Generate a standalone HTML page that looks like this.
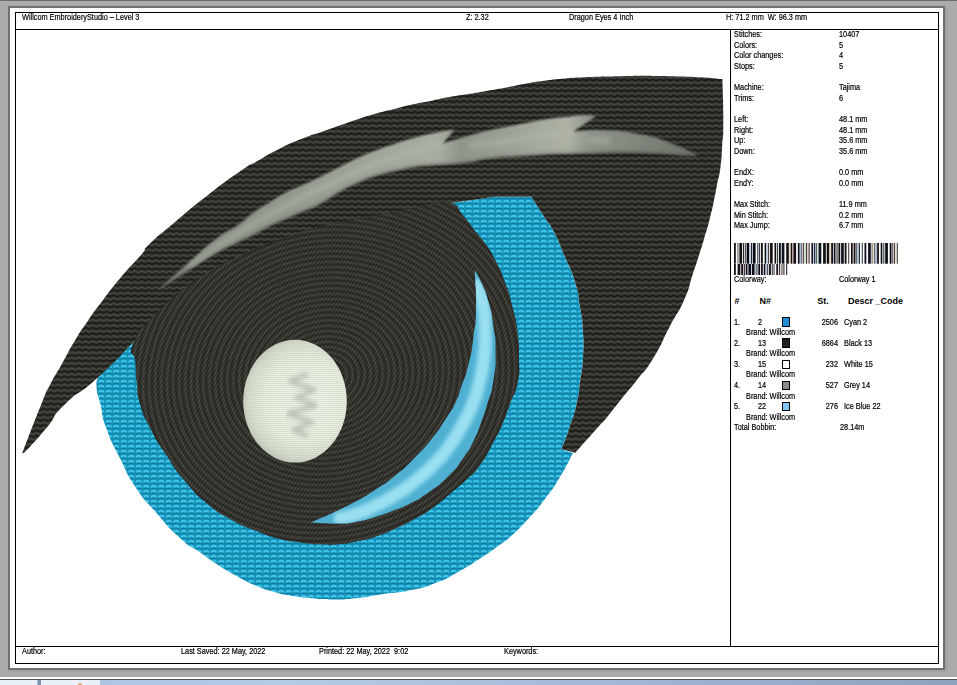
<!DOCTYPE html>
<html>
<head>
<meta charset="utf-8">
<title>Print Preview</title>
<style>
html,body{margin:0;padding:0;}
body{width:957px;height:685px;overflow:hidden;background:#ababab;position:relative;font-family:"Liberation Sans",sans-serif;}
#topstrip{position:absolute;left:0;top:0;width:957px;height:1px;background:#6f6f6f;}
#pageshadow{position:absolute;left:8px;top:6px;width:937px;height:664px;background:#707070;box-shadow:1px 1px 3px rgba(0,0,0,0.12);}
#page{position:absolute;left:10px;top:8px;width:933px;height:660px;background:#fff;}
.ln{position:absolute;background:#000;}
.t{position:absolute;white-space:pre;font-size:8.5px;line-height:10px;color:#000;height:10px;transform:scaleX(0.86);-webkit-text-stroke:0.2px #000;transform-origin:0 0;}
.b{position:absolute;white-space:pre;font-size:9px;line-height:12px;font-weight:bold;color:#000;height:12px;}
.r{text-align:right;transform-origin:100% 0;}
.sw{position:absolute;width:6px;height:7.4px;border:1px solid #000;}
#botwhite{position:absolute;left:0;top:677px;width:957px;height:2px;background:#fdfdfd;}
#botdark{position:absolute;left:0;top:679px;width:957px;height:1px;background:#4a5560;}
#botbar{position:absolute;left:0;top:680px;width:957px;height:5px;background:linear-gradient(to right,#a9c3e0 0%,#b4cbe5 30%,#9fb4d0 70%,#8ea2bd 100%);}
.tab{position:absolute;top:680px;height:5px;background:#eaf0f7;}
</style>
</head>
<body>
<div id="topstrip"></div>
<div id="pageshadow"></div>
<div id="page"></div>

<!-- frame lines (absolute page coordinates) -->
<div class="ln" style="left:15px;top:12px;width:924px;height:1px"></div>
<div class="ln" style="left:15px;top:29px;width:924px;height:1px"></div>
<div class="ln" style="left:15px;top:646px;width:924px;height:1px"></div>
<div class="ln" style="left:15px;top:663px;width:924px;height:1px"></div>
<div class="ln" style="left:15px;top:12px;width:1px;height:652px"></div>
<div class="ln" style="left:938px;top:12px;width:1px;height:652px"></div>
<div class="ln" style="left:730px;top:29px;width:1px;height:618px"></div>

<!-- DESIGN-SVG -->
<svg id="design" width="714" height="616" viewBox="16 30 714 616" style="position:absolute;left:16px;top:30px">
<defs>
<pattern id="pk" width="7" height="5.4" patternUnits="userSpaceOnUse">
<rect width="7" height="5.4" fill="#2a2b26"/>
<path d="M0,1.7 Q1.75,0.4 3.5,1.7 T7,1.7" stroke="#494b43" stroke-width="1.5" fill="none"/>
<path d="M0,4.3 Q1.75,3.5 3.5,4.3 T7,4.3" stroke="#181815" stroke-width="1.2" fill="none"/>
</pattern>
<radialGradient id="pp" gradientUnits="userSpaceOnUse" cx="326" cy="376" r="5.3" spreadMethod="repeat" gradientTransform="translate(326,376) rotate(-12) scale(1.14,1) translate(-326,-376)">
<stop offset="0" stop-color="#2f2e29"/><stop offset="0.4" stop-color="#4c4b44"/><stop offset="0.7" stop-color="#3b3a35"/><stop offset="1" stop-color="#2f2e29"/>
</radialGradient>
<pattern id="ph" width="3" height="3" patternUnits="userSpaceOnUse" patternTransform="rotate(-55)"><path d="M0,1.5 H3" stroke="#000" stroke-width="1.2" opacity="0.36"/></pattern>
<pattern id="pc" width="7.5" height="5" patternUnits="userSpaceOnUse">
<rect width="7.5" height="5" fill="#1a9dc6"/>
<path d="M0.7,2.1 Q3.75,-0.4 6.8,2.1" stroke="#42c8ea" stroke-width="1.6" fill="none"/>
<path d="M0.7,4.3 Q3.75,2.3 6.8,4.3" stroke="#0f7599" stroke-width="1.1" fill="none"/>
<path d="M0,0 V5 M7.5,0 V5" stroke="#1485ad" stroke-width="1"/>
</pattern>
<linearGradient id="gl" gradientUnits="userSpaceOnUse" x1="157" y1="0" x2="698" y2="0">
<stop offset="0" stop-color="#80857b"/><stop offset="0.26" stop-color="#969b90"/><stop offset="0.52" stop-color="#a9aea2"/><stop offset="0.56" stop-color="#90958a"/><stop offset="0.76" stop-color="#adb2a5"/><stop offset="0.80" stop-color="#8f948a"/><stop offset="0.92" stop-color="#7d8278"/><stop offset="1" stop-color="#6a6f66"/>
</linearGradient>
<radialGradient id="gw" gradientUnits="userSpaceOnUse" cx="306" cy="400" r="68">
<stop offset="0" stop-color="#eef2e8"/><stop offset="0.6" stop-color="#e7eddf"/><stop offset="0.85" stop-color="#d6ddce"/><stop offset="1" stop-color="#bac2b2"/>
</radialGradient>
<pattern id="pw" width="4" height="2" patternUnits="userSpaceOnUse"><path d="M0,1.5 H4" stroke="#97a08e" stroke-width="0.7" opacity="0.24"/></pattern>
<linearGradient id="gc" gradientUnits="userSpaceOnUse" x1="480" y1="275" x2="330" y2="520">
<stop offset="0" stop-color="#57b9e0"/><stop offset="0.4" stop-color="#8fd3ef"/><stop offset="0.8" stop-color="#7ccbeb"/><stop offset="1" stop-color="#4aaedb"/>
</linearGradient>
<filter id="bl" x="-20%" y="-20%" width="140%" height="140%"><feGaussianBlur stdDeviation="1.6"/></filter>
<filter id="bl2" x="-5%" y="-10%" width="110%" height="120%"><feGaussianBlur stdDeviation="0.9"/></filter>
<filter id="bl3" x="-5%" y="-20%" width="110%" height="140%"><feGaussianBlur stdDeviation="2.2"/></filter>
<filter id="bl4" x="-5%" y="-5%" width="110%" height="110%"><feGaussianBlur stdDeviation="0.6"/></filter>
<clipPath id="cresclip"><path d="M474.7,269.7C476.8,273.8 476.4,271.2 481.0,282.0C485.6,292.8 484.3,287.0 488.5,302.0C492.7,317.0 491.2,311.0 493.5,327.0C495.8,343.0 495.5,332.3 495.5,350.0C495.5,367.7 496.3,361.7 493.5,380.0C490.7,398.3 491.2,390.7 487.0,405.0C482.8,419.3 485.5,411.0 481.0,423.0C476.5,435.0 479.3,429.5 473.5,441.0C467.7,452.5 472.0,445.7 463.5,457.5C455.0,469.3 460.1,464.6 448.0,476.5C435.9,488.4 439.9,484.2 427.2,493.2C414.5,502.2 421.0,497.8 410.0,503.5C399.0,509.2 405.7,505.8 394.1,510.3C382.5,514.8 387.8,513.2 375.3,517.0C362.8,520.8 369.0,519.5 356.5,521.7C344.0,523.9 353.1,523.3 337.7,523.6C322.3,523.9 319.5,522.9 310.4,522.6C319.5,518.5 322.3,517.6 337.7,510.4C353.1,503.2 344.0,507.9 356.5,501.0C369.0,494.1 362.8,497.9 375.3,489.7C387.8,481.5 381.5,486.6 394.1,476.5C406.7,466.4 400.4,472.1 413.0,459.5C425.6,446.9 421.1,452.0 431.8,438.8C442.5,425.6 437.0,432.3 445.0,420.0C453.0,407.7 450.5,412.8 455.8,402.0C461.1,391.2 456.8,400.0 461.0,387.7C465.2,375.4 464.3,381.8 468.4,365.0C472.5,348.2 470.9,356.7 473.4,337.4C475.9,318.1 475.6,329.6 476.0,307.0C476.4,284.4 475.1,282.1 474.7,269.7Z"/></clipPath>
<clipPath id="lashclip"><path d="M157.5,290.5C167.6,281.5 168.2,280.7 187.7,263.5C207.2,246.3 199.6,251.5 215.9,239.0C232.2,226.5 224.2,234.7 236.7,226.0C249.2,217.3 242.2,220.8 253.4,212.8C264.6,204.8 259.0,208.9 270.2,202.0C281.4,195.1 276.8,197.3 286.9,192.0C297.0,186.7 289.6,191.0 300.6,186.0C311.6,181.0 307.3,183.2 320.0,177.0C332.7,170.8 326.2,173.8 338.8,167.5C351.4,161.2 345.1,163.8 357.7,158.0C370.3,152.2 364.0,155.0 376.5,150.2C389.0,145.4 382.8,147.8 395.3,143.7C407.8,139.6 401.5,141.5 414.1,138.0C426.7,134.5 419.5,136.1 433.0,133.3C446.5,130.5 447.4,130.8 454.6,129.5L442.0,144.6C445.3,143.3 442.3,143.9 451.8,140.8C461.3,137.7 457.9,138.7 470.6,135.2C483.3,131.7 477.3,133.2 490.0,130.3C502.7,127.4 496.2,129.0 508.8,126.5C521.4,124.0 515.1,125.1 527.7,122.7C540.3,120.3 534.0,121.2 546.5,119.3C559.0,117.4 552.8,118.5 565.3,117.1C577.8,115.7 573.7,115.5 584.1,115.2C594.5,114.9 592.3,115.8 596.4,116.1L572.8,132.1C578.5,131.5 579.0,130.8 590.0,130.3C601.0,129.8 595.3,130.2 605.7,130.5C616.1,130.8 610.9,130.2 621.3,131.3C631.7,132.4 626.5,131.9 637.0,133.7C647.5,135.5 642.2,133.9 652.7,136.8C663.2,139.7 658.0,138.4 668.4,142.3C678.8,146.2 674.1,144.2 684.0,148.6C693.9,153.0 693.5,153.3 698.2,155.6C693.5,155.6 699.2,156.4 684.0,155.6C668.8,154.8 673.6,154.3 652.7,153.3C631.8,152.3 642.2,152.5 621.3,152.5C600.4,152.5 608.7,152.9 590.0,153.3C571.3,153.7 586.1,153.0 565.3,153.8C544.5,154.6 552.8,154.1 527.7,155.7C502.6,157.3 509.0,156.4 490.0,158.5C471.0,160.6 483.3,160.2 470.6,162.0C457.9,163.8 464.3,162.9 451.8,164.0C439.3,165.1 445.6,164.2 433.0,165.3C420.4,166.4 426.7,165.3 414.1,167.2C401.5,169.1 407.8,168.2 395.3,171.0C382.8,173.8 389.0,171.7 376.5,175.7C364.0,179.7 370.3,177.4 357.7,183.0C345.1,188.6 351.4,185.5 338.8,192.5C326.2,199.5 333.1,197.2 320.0,204.0C306.9,210.8 310.4,208.2 299.4,213.0C288.4,217.8 296.6,214.2 286.9,218.5C277.2,222.8 281.4,220.5 270.2,226.0C259.0,231.5 264.6,229.3 253.4,235.0C242.2,240.7 249.2,236.8 236.7,243.0C224.2,249.2 232.2,244.2 215.9,253.5C199.6,262.8 207.2,258.7 187.7,271.0C168.2,283.3 167.6,284.0 157.5,290.5Z"/></clipPath>
</defs>
<path d="M450.8,203L495.0,196.8L531.4,196.8C535.9,203.9 537.5,206.3 545.0,218.0C552.5,229.7 547.3,219.0 554.0,232.0C560.7,245.0 558.0,240.3 565.0,257.0C572.0,273.7 570.0,265.3 575.0,282.0C580.0,298.7 577.3,290.3 580.0,307.0C582.7,323.7 582.0,315.2 583.0,332.0C584.0,348.8 584.0,340.6 583.0,357.5C582.0,374.4 582.1,367.1 580.0,382.6C577.9,398.1 580.3,388.5 576.6,404.0C572.9,419.5 574.0,413.9 569.0,429.0C564.0,444.1 564.0,442.5 561.5,449.2L572.8,453.0C568.5,461.0 569.3,461.7 560.0,477.0C550.7,492.3 555.8,484.8 545.0,499.0C534.2,513.2 539.3,506.8 527.6,519.5C515.9,532.2 519.1,528.7 510.0,537.0C500.9,545.3 510.5,537.1 500.3,544.5C490.1,551.9 493.3,550.0 479.4,559.1C465.5,568.2 473.1,563.7 458.5,571.7C443.9,579.7 451.7,576.8 435.5,583.0C419.3,589.2 428.3,586.5 410.0,590.3C391.7,594.1 398.7,591.8 380.5,594.4C362.3,597.0 372.1,596.5 355.4,598.2C338.7,599.9 344.8,599.4 330.3,599.4C315.8,599.4 324.2,599.4 311.8,598.3C299.4,597.2 305.6,598.1 293.0,596.0C280.4,593.9 286.7,595.6 274.1,592.0C261.5,588.4 267.8,590.6 255.3,585.3C242.8,580.0 249.0,582.8 236.5,576.0C224.0,569.2 230.3,572.9 217.7,564.8C205.1,556.7 211.4,560.5 198.8,551.6C186.2,542.7 194.4,551.2 180.0,538.0C165.6,524.8 170.4,529.0 155.6,512.0C140.8,495.0 147.2,504.7 135.5,487.0C123.8,469.3 130.0,478.3 120.4,459.0C110.8,439.7 113.3,447.3 106.6,429.0C99.9,410.7 103.7,417.7 100.4,404.0C97.1,390.3 97.4,396.8 96.6,388.0C95.8,379.2 97.5,381.1 97.9,377.6L134.3,341.2Z" fill="url(#pc)"/>
<path d="M22.0,453.7C28.5,437.1 32.1,426.9 41.4,404.0C50.7,381.1 42.9,398.8 50.0,385.0C57.1,371.2 54.3,377.5 62.7,362.5C71.1,347.5 66.9,353.8 75.3,340.0C83.7,326.2 78.6,334.3 87.8,321.0C97.0,307.7 92.1,314.3 103.0,300.0C113.9,285.7 107.9,292.8 120.4,278.0C132.9,263.2 130.6,267.1 140.5,255.6C150.4,244.1 138.7,254.7 150.0,243.6C161.3,232.5 155.7,238.2 174.5,222.4C193.3,206.6 183.3,214.1 206.5,196.2C229.7,178.3 227.9,179.8 244.1,168.6C260.3,157.4 243.0,169.2 255.0,162.5C267.0,155.8 263.3,156.8 280.0,148.5C296.7,140.2 291.7,142.9 305.0,137.5C318.3,132.1 308.7,136.3 320.0,132.4C331.3,128.5 326.2,130.2 338.8,125.8C351.4,121.4 345.1,123.3 357.7,119.2C370.3,115.1 364.0,117.0 376.5,113.5C389.0,110.0 382.8,111.9 395.3,108.8C407.8,105.7 401.5,106.9 414.1,104.1C426.7,101.3 420.4,102.9 433.0,100.4C445.6,97.9 439.3,98.8 451.8,96.6C464.3,94.4 457.9,95.9 470.6,93.8C483.3,91.7 477.3,92.6 490.0,90.3C502.7,88.0 496.2,89.3 508.8,86.9C521.4,84.5 515.1,85.4 527.7,83.2C540.3,81.0 534.0,82.0 546.5,80.4C559.0,78.8 552.8,79.6 565.3,78.5C577.8,77.4 565.3,78.0 584.1,77.2C602.9,76.4 598.9,76.6 621.8,76.2C644.7,75.8 633.3,75.8 652.7,75.9C672.1,76.0 664.3,76.0 680.0,76.4C695.7,76.8 685.6,76.3 699.7,77.2C713.8,78.1 714.8,78.5 722.4,79.1C722.7,93.7 723.4,100.5 723.3,122.8C723.2,145.1 723.1,131.3 722.2,146.0C721.3,160.7 722.2,154.0 720.5,167.0C718.8,180.0 719.1,174.0 717.0,185.0C714.9,196.0 716.5,188.7 714.1,200.0C711.7,211.3 713.1,205.8 709.7,219.0C706.3,232.2 707.8,226.3 703.9,239.5C700.0,252.7 701.9,246.3 698.0,258.5C694.1,270.7 696.8,262.2 692.2,276.0C687.6,289.8 691.7,283.0 684.1,300.0C676.5,317.0 679.5,308.0 669.5,327.0C659.5,346.0 664.8,339.3 654.0,357.0C643.2,374.7 646.1,368.1 637.0,380.0C627.9,391.9 633.5,384.2 626.7,392.6C619.9,401.0 623.4,396.7 616.7,405.1C610.0,413.5 613.7,409.3 606.6,417.7C599.5,426.1 605.8,418.5 595.3,430.2C584.8,441.9 581.9,445.3 575.2,452.8L561.5,449.2C564.0,442.5 564.0,444.1 569.0,429.0C574.0,413.9 572.9,419.5 576.6,404.0C580.3,388.5 577.9,398.1 580.0,382.6C582.1,367.1 582.0,374.4 583.0,357.5C584.0,340.6 584.0,348.8 583.0,332.0C582.0,315.2 582.7,323.7 580.0,307.0C577.3,290.3 580.0,298.7 575.0,282.0C570.0,265.3 572.0,273.7 565.0,257.0C558.0,240.3 560.7,245.0 554.0,232.0C547.3,219.0 552.5,229.7 545.0,218.0C537.5,206.3 535.9,203.9 531.4,196.8L495.0,196.8L450.8,203.0L300.0,300.0L134.3,341.2C122.2,353.3 120.9,356.7 97.9,377.6C74.9,398.5 82.0,387.7 65.2,404.0C48.4,420.3 59.3,412.4 47.6,426.6C35.9,440.8 38.5,437.7 30.0,446.7C21.5,455.7 24.7,451.4 22.0,453.7Z" fill="url(#pk)"/>
<path d="M134.3,341.2C126.1,358.7 134.7,348.8 135.5,362.6C136.3,376.4 135.3,368.8 136.8,382.6C138.3,396.4 135.4,388.5 140.0,404.0C144.6,419.5 142.1,412.3 150.6,429.0C159.1,445.7 153.9,436.3 165.6,454.0C177.3,471.7 171.5,465.2 185.7,482.0C199.9,498.8 193.2,491.9 208.3,504.4C223.4,516.9 215.4,510.8 231.0,519.5C246.6,528.2 238.7,524.1 255.0,530.6C271.3,537.1 265.0,535.1 280.0,539.0C295.0,542.9 287.1,540.6 300.0,542.4C312.9,544.2 306.2,543.7 318.8,544.3C331.4,544.9 325.1,545.3 337.7,544.3C350.3,543.3 344.0,543.9 356.5,541.4C369.0,538.9 362.8,540.8 375.3,536.7C387.8,532.6 381.5,534.8 394.1,529.2C406.7,523.6 400.4,526.7 413.0,519.8C425.6,512.9 419.3,517.3 431.8,508.5C444.3,499.7 439.2,502.9 450.6,493.4C462.0,483.9 456.2,489.4 466.0,480.0C475.8,470.6 471.0,477.5 480.0,465.2C489.0,452.9 485.5,456.7 493.0,443.0C500.5,429.3 496.8,437.0 502.5,424.0C508.2,411.0 505.0,417.8 510.0,404.0C515.0,390.2 514.6,398.1 517.6,382.6C520.6,367.1 519.0,374.2 519.0,357.5C519.0,340.8 519.7,349.1 517.6,332.4C515.5,315.7 516.8,324.1 512.6,307.3C508.4,290.5 510.9,297.9 505.0,282.0C499.1,266.1 501.3,272.1 495.0,259.6C488.7,247.1 492.3,253.7 486.0,244.5C479.7,235.3 483.5,241.6 476.0,232.0C468.5,222.4 471.8,225.4 463.4,215.7C455.0,206.0 461.7,206.9 450.8,203.0C439.9,199.1 447.6,201.5 430.7,204.0C413.8,206.5 423.6,205.7 400.0,210.5C376.4,215.3 386.8,213.1 360.0,218.5C333.2,223.9 347.7,219.3 319.6,226.7C291.5,234.1 305.0,229.8 275.7,240.8C246.4,251.8 259.0,246.0 231.8,259.6C204.6,273.2 217.9,264.8 194.0,281.6C170.1,298.4 179.9,290.1 160.0,310.0C140.1,329.9 142.5,323.7 134.3,341.2Z" fill="url(#pp)"/>
<path d="M134.3,341.2C126.1,358.7 134.7,348.8 135.5,362.6C136.3,376.4 135.3,368.8 136.8,382.6C138.3,396.4 135.4,388.5 140.0,404.0C144.6,419.5 142.1,412.3 150.6,429.0C159.1,445.7 153.9,436.3 165.6,454.0C177.3,471.7 171.5,465.2 185.7,482.0C199.9,498.8 193.2,491.9 208.3,504.4C223.4,516.9 215.4,510.8 231.0,519.5C246.6,528.2 238.7,524.1 255.0,530.6C271.3,537.1 265.0,535.1 280.0,539.0C295.0,542.9 287.1,540.6 300.0,542.4C312.9,544.2 306.2,543.7 318.8,544.3C331.4,544.9 325.1,545.3 337.7,544.3C350.3,543.3 344.0,543.9 356.5,541.4C369.0,538.9 362.8,540.8 375.3,536.7C387.8,532.6 381.5,534.8 394.1,529.2C406.7,523.6 400.4,526.7 413.0,519.8C425.6,512.9 419.3,517.3 431.8,508.5C444.3,499.7 439.2,502.9 450.6,493.4C462.0,483.9 456.2,489.4 466.0,480.0C475.8,470.6 471.0,477.5 480.0,465.2C489.0,452.9 485.5,456.7 493.0,443.0C500.5,429.3 496.8,437.0 502.5,424.0C508.2,411.0 505.0,417.8 510.0,404.0C515.0,390.2 514.6,398.1 517.6,382.6C520.6,367.1 519.0,374.2 519.0,357.5C519.0,340.8 519.7,349.1 517.6,332.4C515.5,315.7 516.8,324.1 512.6,307.3C508.4,290.5 510.9,297.9 505.0,282.0C499.1,266.1 501.3,272.1 495.0,259.6C488.7,247.1 492.3,253.7 486.0,244.5C479.7,235.3 483.5,241.6 476.0,232.0C468.5,222.4 471.8,225.4 463.4,215.7C455.0,206.0 461.7,206.9 450.8,203.0C439.9,199.1 447.6,201.5 430.7,204.0C413.8,206.5 423.6,205.7 400.0,210.5C376.4,215.3 386.8,213.1 360.0,218.5C333.2,223.9 347.7,219.3 319.6,226.7C291.5,234.1 305.0,229.8 275.7,240.8C246.4,251.8 259.0,246.0 231.8,259.6C204.6,273.2 217.9,264.8 194.0,281.6C170.1,298.4 179.9,290.1 160.0,310.0C140.1,329.9 142.5,323.7 134.3,341.2Z" fill="url(#ph)"/>
<ellipse cx="295" cy="401.2" rx="51.8" ry="61.4" fill="url(#gw)"/>
<ellipse cx="295" cy="401.2" rx="51.8" ry="61.4" fill="url(#pw)"/>
<polyline points="308,374 290,381 314,390 296,398 316,405 288,414 312,422 294,430 308,436" fill="none" stroke="#7d8278" stroke-width="5" stroke-linejoin="round" opacity="0.36" filter="url(#bl3)"/>
<g filter="url(#bl2)"><path d="M157.5,290.5C167.6,281.5 168.2,280.7 187.7,263.5C207.2,246.3 199.6,251.5 215.9,239.0C232.2,226.5 224.2,234.7 236.7,226.0C249.2,217.3 242.2,220.8 253.4,212.8C264.6,204.8 259.0,208.9 270.2,202.0C281.4,195.1 276.8,197.3 286.9,192.0C297.0,186.7 289.6,191.0 300.6,186.0C311.6,181.0 307.3,183.2 320.0,177.0C332.7,170.8 326.2,173.8 338.8,167.5C351.4,161.2 345.1,163.8 357.7,158.0C370.3,152.2 364.0,155.0 376.5,150.2C389.0,145.4 382.8,147.8 395.3,143.7C407.8,139.6 401.5,141.5 414.1,138.0C426.7,134.5 419.5,136.1 433.0,133.3C446.5,130.5 447.4,130.8 454.6,129.5L442.0,144.6C445.3,143.3 442.3,143.9 451.8,140.8C461.3,137.7 457.9,138.7 470.6,135.2C483.3,131.7 477.3,133.2 490.0,130.3C502.7,127.4 496.2,129.0 508.8,126.5C521.4,124.0 515.1,125.1 527.7,122.7C540.3,120.3 534.0,121.2 546.5,119.3C559.0,117.4 552.8,118.5 565.3,117.1C577.8,115.7 573.7,115.5 584.1,115.2C594.5,114.9 592.3,115.8 596.4,116.1L572.8,132.1C578.5,131.5 579.0,130.8 590.0,130.3C601.0,129.8 595.3,130.2 605.7,130.5C616.1,130.8 610.9,130.2 621.3,131.3C631.7,132.4 626.5,131.9 637.0,133.7C647.5,135.5 642.2,133.9 652.7,136.8C663.2,139.7 658.0,138.4 668.4,142.3C678.8,146.2 674.1,144.2 684.0,148.6C693.9,153.0 693.5,153.3 698.2,155.6C693.5,155.6 699.2,156.4 684.0,155.6C668.8,154.8 673.6,154.3 652.7,153.3C631.8,152.3 642.2,152.5 621.3,152.5C600.4,152.5 608.7,152.9 590.0,153.3C571.3,153.7 586.1,153.0 565.3,153.8C544.5,154.6 552.8,154.1 527.7,155.7C502.6,157.3 509.0,156.4 490.0,158.5C471.0,160.6 483.3,160.2 470.6,162.0C457.9,163.8 464.3,162.9 451.8,164.0C439.3,165.1 445.6,164.2 433.0,165.3C420.4,166.4 426.7,165.3 414.1,167.2C401.5,169.1 407.8,168.2 395.3,171.0C382.8,173.8 389.0,171.7 376.5,175.7C364.0,179.7 370.3,177.4 357.7,183.0C345.1,188.6 351.4,185.5 338.8,192.5C326.2,199.5 333.1,197.2 320.0,204.0C306.9,210.8 310.4,208.2 299.4,213.0C288.4,217.8 296.6,214.2 286.9,218.5C277.2,222.8 281.4,220.5 270.2,226.0C259.0,231.5 264.6,229.3 253.4,235.0C242.2,240.7 249.2,236.8 236.7,243.0C224.2,249.2 232.2,244.2 215.9,253.5C199.6,262.8 207.2,258.7 187.7,271.0C168.2,283.3 167.6,284.0 157.5,290.5Z" fill="url(#gl)"/></g>
<g clip-path="url(#lashclip)" filter="url(#bl3)"><path d="M698.2,155.6C693.5,155.6 699.2,156.4 684.0,155.6C668.8,154.8 673.6,154.3 652.7,153.3C631.8,152.3 642.2,152.5 621.3,152.5C600.4,152.5 608.7,152.9 590.0,153.3C571.3,153.7 586.1,153.0 565.3,153.8C544.5,154.6 552.8,154.1 527.7,155.7C502.6,157.3 509.0,156.4 490.0,158.5C471.0,160.6 483.3,160.2 470.6,162.0C457.9,163.8 464.3,162.9 451.8,164.0C439.3,165.1 445.6,164.2 433.0,165.3C420.4,166.4 426.7,165.3 414.1,167.2C401.5,169.1 407.8,168.2 395.3,171.0C382.8,173.8 389.0,171.7 376.5,175.7C364.0,179.7 370.3,177.4 357.7,183.0C345.1,188.6 351.4,185.5 338.8,192.5C326.2,199.5 333.1,197.2 320.0,204.0C306.9,210.8 310.4,208.2 299.4,213.0C288.4,217.8 296.6,214.2 286.9,218.5C277.2,222.8 281.4,220.5 270.2,226.0C259.0,231.5 264.6,229.3 253.4,235.0C242.2,240.7 249.2,236.8 236.7,243.0C224.2,249.2 232.2,244.2 215.9,253.5C199.6,262.8 207.2,258.7 187.7,271.0C168.2,283.3 167.6,284.0 157.5,290.5" fill="none" stroke="#4e524b" stroke-width="4" opacity="0.4"/><path d="M190,266 L215,248 L260,220 L300,198 L340,179 L380,162 L420,150 L447,143 M470,146 L520,139 L560,134 L574,133 M588,140 L610,141" fill="none" stroke="#b7bcaf" stroke-width="6" opacity="0.4"/></g>
<g filter="url(#bl4)"><path d="M474.7,269.7C476.8,273.8 476.4,271.2 481.0,282.0C485.6,292.8 484.3,287.0 488.5,302.0C492.7,317.0 491.2,311.0 493.5,327.0C495.8,343.0 495.5,332.3 495.5,350.0C495.5,367.7 496.3,361.7 493.5,380.0C490.7,398.3 491.2,390.7 487.0,405.0C482.8,419.3 485.5,411.0 481.0,423.0C476.5,435.0 479.3,429.5 473.5,441.0C467.7,452.5 472.0,445.7 463.5,457.5C455.0,469.3 460.1,464.6 448.0,476.5C435.9,488.4 439.9,484.2 427.2,493.2C414.5,502.2 421.0,497.8 410.0,503.5C399.0,509.2 405.7,505.8 394.1,510.3C382.5,514.8 387.8,513.2 375.3,517.0C362.8,520.8 369.0,519.5 356.5,521.7C344.0,523.9 353.1,523.3 337.7,523.6C322.3,523.9 319.5,522.9 310.4,522.6C319.5,518.5 322.3,517.6 337.7,510.4C353.1,503.2 344.0,507.9 356.5,501.0C369.0,494.1 362.8,497.9 375.3,489.7C387.8,481.5 381.5,486.6 394.1,476.5C406.7,466.4 400.4,472.1 413.0,459.5C425.6,446.9 421.1,452.0 431.8,438.8C442.5,425.6 437.0,432.3 445.0,420.0C453.0,407.7 450.5,412.8 455.8,402.0C461.1,391.2 456.8,400.0 461.0,387.7C465.2,375.4 464.3,381.8 468.4,365.0C472.5,348.2 470.9,356.7 473.4,337.4C475.9,318.1 475.6,329.6 476.0,307.0C476.4,284.4 475.1,282.1 474.7,269.7Z" fill="#4fb0d2"/></g>
<g clip-path="url(#cresclip)"><path d="M476.0,285.0C478.3,291.3 480.0,288.3 483.0,304.0C486.0,319.7 484.7,314.3 485.0,332.0C485.3,349.7 486.0,339.7 484.0,357.0C482.0,374.3 482.7,368.7 479.0,384.0C475.3,399.3 478.0,390.3 473.0,403.0C468.0,415.7 471.7,408.0 464.0,422.0C456.3,436.0 460.0,431.0 450.0,445.0C440.0,459.0 445.7,452.0 434.0,464.0C422.3,476.0 427.7,470.8 415.0,481.0C402.3,491.2 408.7,486.5 396.0,494.5C383.3,502.5 389.7,498.7 377.0,505.0C364.3,511.3 370.3,509.0 358.0,513.5C345.7,518.0 346.0,516.8 340.0,518.5" fill="none" stroke="#9fe2f3" stroke-width="13" stroke-linecap="round" opacity="0.95" filter="url(#bl3)"/></g>
</svg>
<!-- /DESIGN-SVG -->

<!-- header text -->
<div class="t" style="left:22px;top:12.2px">Willcom EmbroideryStudio – Level 3</div>
<div class="t" style="left:466px;top:12.2px">Z: 2.32</div>
<div class="t" style="left:569px;top:12.2px">Dragon Eyes 4 Inch</div>
<div class="t" style="left:726px;top:12.2px">H: 71.2 mm  W: 96.3 mm</div>

<!-- footer text -->
<div class="t" style="left:22px;top:646.2px">Author:</div>
<div class="t" style="left:181px;top:646.2px">Last Saved: 22 May, 2022</div>
<div class="t" style="left:319px;top:646.2px">Printed: 22 May, 2022  9:02</div>
<div class="t" style="left:504px;top:646.2px">Keywords:</div>

<!-- PANEL -->
<div class="t" style="left:734.4px;top:28.95px">Stitches:</div>
<div class="t" style="left:838.6px;top:28.95px">10407</div>
<div class="t" style="left:734.4px;top:39.59px">Colors:</div>
<div class="t" style="left:838.6px;top:39.59px">5</div>
<div class="t" style="left:734.4px;top:50.23px">Color changes:</div>
<div class="t" style="left:838.6px;top:50.23px">4</div>
<div class="t" style="left:734.4px;top:60.87px">Stops:</div>
<div class="t" style="left:838.6px;top:60.87px">5</div>
<div class="t" style="left:734.4px;top:82.15px">Machine:</div>
<div class="t" style="left:838.6px;top:82.15px">Tajima</div>
<div class="t" style="left:734.4px;top:92.79px">Trims:</div>
<div class="t" style="left:838.6px;top:92.79px">6</div>
<div class="t" style="left:734.4px;top:114.07px">Left:</div>
<div class="t" style="left:838.6px;top:114.07px">48.1 mm</div>
<div class="t" style="left:734.4px;top:124.71px">Right:</div>
<div class="t" style="left:838.6px;top:124.71px">48.1 mm</div>
<div class="t" style="left:734.4px;top:135.35px">Up:</div>
<div class="t" style="left:838.6px;top:135.35px">35.6 mm</div>
<div class="t" style="left:734.4px;top:145.99px">Down:</div>
<div class="t" style="left:838.6px;top:145.99px">35.6 mm</div>
<div class="t" style="left:734.4px;top:167.27px">EndX:</div>
<div class="t" style="left:838.6px;top:167.27px">0.0 mm</div>
<div class="t" style="left:734.4px;top:177.91px">EndY:</div>
<div class="t" style="left:838.6px;top:177.91px">0.0 mm</div>
<div class="t" style="left:734.4px;top:199.19px">Max Stitch:</div>
<div class="t" style="left:838.6px;top:199.19px">11.9 mm</div>
<div class="t" style="left:734.4px;top:209.83px">Min Stitch:</div>
<div class="t" style="left:838.6px;top:209.83px">0.2 mm</div>
<div class="t" style="left:734.4px;top:220.47px">Max Jump:</div>
<div class="t" style="left:838.6px;top:220.47px">6.7 mm</div>
<svg style="position:absolute;left:734.2px;top:242.9px" width="164.10" height="20.70"><rect x="0.00" y="0" width="1.80" height="20.70" fill="#14101c"/><rect x="3.60" y="0" width="0.90" height="20.70" fill="#101010"/><rect x="4.50" y="0" width="0.90" height="20.70" fill="#e6e0c4"/><rect x="5.40" y="0" width="2.70" height="20.70" fill="#14101c"/><rect x="8.10" y="0" width="0.90" height="20.70" fill="#d0e2d0"/><rect x="9.00" y="0" width="0.90" height="20.70" fill="#14101c"/><rect x="10.80" y="0" width="0.90" height="20.70" fill="#101010"/><rect x="12.60" y="0" width="2.70" height="20.70" fill="#0a0a14"/><rect x="15.30" y="0" width="1.80" height="20.70" fill="#c6d2e6"/><rect x="17.10" y="0" width="0.90" height="20.70" fill="#101010"/><rect x="18.00" y="0" width="0.90" height="20.70" fill="#c6d2e6"/><rect x="18.90" y="0" width="2.70" height="20.70" fill="#0a0a14"/><rect x="23.40" y="0" width="0.90" height="20.70" fill="#0a0a14"/><rect x="24.30" y="0" width="0.90" height="20.70" fill="#a9bcd6"/><rect x="25.20" y="0" width="0.90" height="20.70" fill="#101010"/><rect x="27.00" y="0" width="1.80" height="20.70" fill="#101010"/><rect x="30.60" y="0" width="1.80" height="20.70" fill="#101010"/><rect x="32.40" y="0" width="1.80" height="20.70" fill="#c6d2e6"/><rect x="34.20" y="0" width="0.90" height="20.70" fill="#14101c"/><rect x="36.00" y="0" width="2.70" height="20.70" fill="#1a1018"/><rect x="40.50" y="0" width="1.80" height="20.70" fill="#101010"/><rect x="42.30" y="0" width="0.90" height="20.70" fill="#d0e2d0"/><rect x="43.20" y="0" width="0.90" height="20.70" fill="#0c1420"/><rect x="45.00" y="0" width="1.80" height="20.70" fill="#0a0a14"/><rect x="47.70" y="0" width="2.70" height="20.70" fill="#0c1420"/><rect x="52.20" y="0" width="2.70" height="20.70" fill="#1a1018"/><rect x="54.90" y="0" width="1.80" height="20.70" fill="#e6e0c4"/><rect x="56.70" y="0" width="1.80" height="20.70" fill="#1a1018"/><rect x="58.50" y="0" width="0.90" height="20.70" fill="#e3c8c8"/><rect x="59.40" y="0" width="2.70" height="20.70" fill="#1a1018"/><rect x="63.90" y="0" width="1.80" height="20.70" fill="#0a0a14"/><rect x="65.70" y="0" width="1.80" height="20.70" fill="#a9bcd6"/><rect x="67.50" y="0" width="0.90" height="20.70" fill="#1a1018"/><rect x="68.40" y="0" width="0.90" height="20.70" fill="#e3c8c8"/><rect x="69.30" y="0" width="0.90" height="20.70" fill="#14101c"/><rect x="70.20" y="0" width="1.80" height="20.70" fill="#d0e2d0"/><rect x="72.00" y="0" width="0.90" height="20.70" fill="#14101c"/><rect x="72.90" y="0" width="1.80" height="20.70" fill="#e3c8c8"/><rect x="74.70" y="0" width="0.90" height="20.70" fill="#1a1018"/><rect x="77.40" y="0" width="1.80" height="20.70" fill="#1a1018"/><rect x="79.20" y="0" width="0.90" height="20.70" fill="#c6d2e6"/><rect x="80.10" y="0" width="0.90" height="20.70" fill="#14101c"/><rect x="81.00" y="0" width="0.90" height="20.70" fill="#a9bcd6"/><rect x="81.90" y="0" width="0.90" height="20.70" fill="#0c1420"/><rect x="82.80" y="0" width="1.80" height="20.70" fill="#d0e2d0"/><rect x="84.60" y="0" width="2.70" height="20.70" fill="#0c1420"/><rect x="89.10" y="0" width="2.70" height="20.70" fill="#101010"/><rect x="92.70" y="0" width="2.70" height="20.70" fill="#1a1018"/><rect x="95.40" y="0" width="1.80" height="20.70" fill="#e6e0c4"/><rect x="97.20" y="0" width="1.80" height="20.70" fill="#1a1018"/><rect x="99.00" y="0" width="0.90" height="20.70" fill="#c6d2e6"/><rect x="99.90" y="0" width="1.80" height="20.70" fill="#14101c"/><rect x="101.70" y="0" width="0.90" height="20.70" fill="#e6e0c4"/><rect x="102.60" y="0" width="0.90" height="20.70" fill="#0a0a14"/><rect x="104.40" y="0" width="1.80" height="20.70" fill="#101010"/><rect x="106.20" y="0" width="0.90" height="20.70" fill="#c6d2e6"/><rect x="107.10" y="0" width="2.70" height="20.70" fill="#1a1018"/><rect x="110.70" y="0" width="1.80" height="20.70" fill="#101010"/><rect x="114.30" y="0" width="0.90" height="20.70" fill="#1a1018"/><rect x="117.00" y="0" width="1.80" height="20.70" fill="#0a0a14"/><rect x="118.80" y="0" width="0.90" height="20.70" fill="#e3c8c8"/><rect x="119.70" y="0" width="1.80" height="20.70" fill="#1a1018"/><rect x="122.40" y="0" width="0.90" height="20.70" fill="#101010"/><rect x="123.30" y="0" width="1.80" height="20.70" fill="#a9bcd6"/><rect x="125.10" y="0" width="0.90" height="20.70" fill="#101010"/><rect x="127.80" y="0" width="0.90" height="20.70" fill="#0c1420"/><rect x="130.50" y="0" width="1.80" height="20.70" fill="#14101c"/><rect x="134.10" y="0" width="2.70" height="20.70" fill="#14101c"/><rect x="137.70" y="0" width="0.90" height="20.70" fill="#14101c"/><rect x="138.60" y="0" width="1.80" height="20.70" fill="#e6e0c4"/><rect x="140.40" y="0" width="0.90" height="20.70" fill="#0c1420"/><rect x="141.30" y="0" width="1.80" height="20.70" fill="#a9bcd6"/><rect x="143.10" y="0" width="1.80" height="20.70" fill="#1a1018"/><rect x="146.70" y="0" width="1.80" height="20.70" fill="#0a0a14"/><rect x="148.50" y="0" width="0.90" height="20.70" fill="#d0e2d0"/><rect x="149.40" y="0" width="0.90" height="20.70" fill="#0c1420"/><rect x="151.20" y="0" width="2.70" height="20.70" fill="#0a0a14"/><rect x="155.70" y="0" width="1.80" height="20.70" fill="#0a0a14"/><rect x="158.40" y="0" width="0.90" height="20.70" fill="#1a1018"/><rect x="159.30" y="0" width="0.90" height="20.70" fill="#e3c8c8"/><rect x="160.20" y="0" width="0.90" height="20.70" fill="#1a1018"/><rect x="161.10" y="0" width="1.80" height="20.70" fill="#e6e0c4"/><rect x="162.90" y="0" width="0.90" height="20.70" fill="#14101c"/><rect x="163.80" y="0" width="0.90" height="20.70" fill="#a9bcd6"/></svg>
<svg style="position:absolute;left:734.2px;top:263.6px" width="53.70" height="11.10"><rect x="0.00" y="0" width="1.80" height="11.10" fill="#101010"/><rect x="3.60" y="0" width="2.70" height="11.10" fill="#14101c"/><rect x="7.20" y="0" width="1.80" height="11.10" fill="#101010"/><rect x="9.00" y="0" width="0.90" height="11.10" fill="#e3c8c8"/><rect x="9.90" y="0" width="0.90" height="11.10" fill="#0a0a14"/><rect x="11.70" y="0" width="1.80" height="11.10" fill="#1a1018"/><rect x="14.40" y="0" width="2.70" height="11.10" fill="#0a0a14"/><rect x="17.10" y="0" width="0.90" height="11.10" fill="#c6d2e6"/><rect x="18.00" y="0" width="2.70" height="11.10" fill="#0a0a14"/><rect x="20.70" y="0" width="1.80" height="11.10" fill="#a9bcd6"/><rect x="22.50" y="0" width="0.90" height="11.10" fill="#101010"/><rect x="24.30" y="0" width="1.80" height="11.10" fill="#0a0a14"/><rect x="27.00" y="0" width="1.80" height="11.10" fill="#1a1018"/><rect x="29.70" y="0" width="1.80" height="11.10" fill="#14101c"/><rect x="31.50" y="0" width="1.80" height="11.10" fill="#a9bcd6"/><rect x="33.30" y="0" width="0.90" height="11.10" fill="#1a1018"/><rect x="35.10" y="0" width="1.80" height="11.10" fill="#0a0a14"/><rect x="37.80" y="0" width="0.90" height="11.10" fill="#14101c"/><rect x="39.60" y="0" width="0.90" height="11.10" fill="#1a1018"/><rect x="42.30" y="0" width="1.80" height="11.10" fill="#1a1018"/><rect x="45.00" y="0" width="0.90" height="11.10" fill="#0c1420"/><rect x="45.90" y="0" width="1.80" height="11.10" fill="#e3c8c8"/><rect x="47.70" y="0" width="0.90" height="11.10" fill="#1a1018"/><rect x="48.60" y="0" width="0.90" height="11.10" fill="#e6e0c4"/><rect x="49.50" y="0" width="0.90" height="11.10" fill="#0a0a14"/><rect x="52.20" y="0" width="0.90" height="11.10" fill="#101010"/><rect x="53.10" y="0" width="0.90" height="11.10" fill="#c6d2e6"/></svg>
<div class="t" style="left:734.4px;top:274.15px">Colorway:</div>
<div class="t" style="left:838.6px;top:274.15px">Colorway 1</div>
<div class="b" style="left:734.5px;top:294.88px">#</div>
<div class="b" style="left:759.5px;top:294.88px">N#</div>
<div class="b" style="left:817.2px;top:294.88px">St.</div>
<div class="b" style="left:847.9px;top:294.88px">Descr _Code</div>
<div class="t" style="left:734.4px;top:316.55px">1.</div>
<div class="t" style="left:758px;top:316.55px">2</div>
<div class="sw" style="left:782px;top:317.20px;background:#1f8fd6"></div>
<div class="t r" style="left:798px;width:40px;top:316.55px">2506</div>
<div class="t" style="left:843.5px;top:316.55px">Cyan 2</div>
<div class="t" style="left:746.1px;top:327.13px">Brand: Willcom</div>
<div class="t" style="left:734.4px;top:337.71px">2.</div>
<div class="t" style="left:758px;top:337.71px">13</div>
<div class="sw" style="left:782px;top:338.36px;background:#231f20"></div>
<div class="t r" style="left:798px;width:40px;top:337.71px">6864</div>
<div class="t" style="left:843.5px;top:337.71px">Black 13</div>
<div class="t" style="left:746.1px;top:348.29px">Brand: Willcom</div>
<div class="t" style="left:734.4px;top:358.87px">3.</div>
<div class="t" style="left:758px;top:358.87px">15</div>
<div class="sw" style="left:782px;top:359.52px;background:#ffffff"></div>
<div class="t r" style="left:798px;width:40px;top:358.87px">232</div>
<div class="t" style="left:843.5px;top:358.87px">White 15</div>
<div class="t" style="left:746.1px;top:369.45px">Brand: Willcom</div>
<div class="t" style="left:734.4px;top:380.03px">4.</div>
<div class="t" style="left:758px;top:380.03px">14</div>
<div class="sw" style="left:782px;top:380.68px;background:#8a8a8a"></div>
<div class="t r" style="left:798px;width:40px;top:380.03px">527</div>
<div class="t" style="left:843.5px;top:380.03px">Grey 14</div>
<div class="t" style="left:746.1px;top:390.61px">Brand: Willcom</div>
<div class="t" style="left:734.4px;top:401.19px">5.</div>
<div class="t" style="left:758px;top:401.19px">22</div>
<div class="sw" style="left:782px;top:401.84px;background:#7fc6f2"></div>
<div class="t r" style="left:798px;width:40px;top:401.19px">276</div>
<div class="t" style="left:843.5px;top:401.19px">Ice Blue 22</div>
<div class="t" style="left:746.1px;top:411.77px">Brand: Willcom</div>
<div class="t" style="left:734.4px;top:422.35px">Total Bobbin:</div>
<div class="t" style="left:840.3px;top:422.35px">28.14m</div>
<!-- /PANEL -->

<!-- bottom chrome -->
<div id="botwhite"></div>
<div id="botdark"></div>
<div id="botbar"></div>
<div class="tab" style="left:0;width:37px"></div>
<div class="tab" style="left:41px;width:59px"></div>
<div style="position:absolute;left:38px;top:680px;width:3px;height:5px;background:#7f93ad"></div>
<div id="orangedot" style="position:absolute;left:78px;top:683px;width:4px;height:2px;background:#e0a060;border-radius:2px 2px 0 0"></div>
</body>
</html>
